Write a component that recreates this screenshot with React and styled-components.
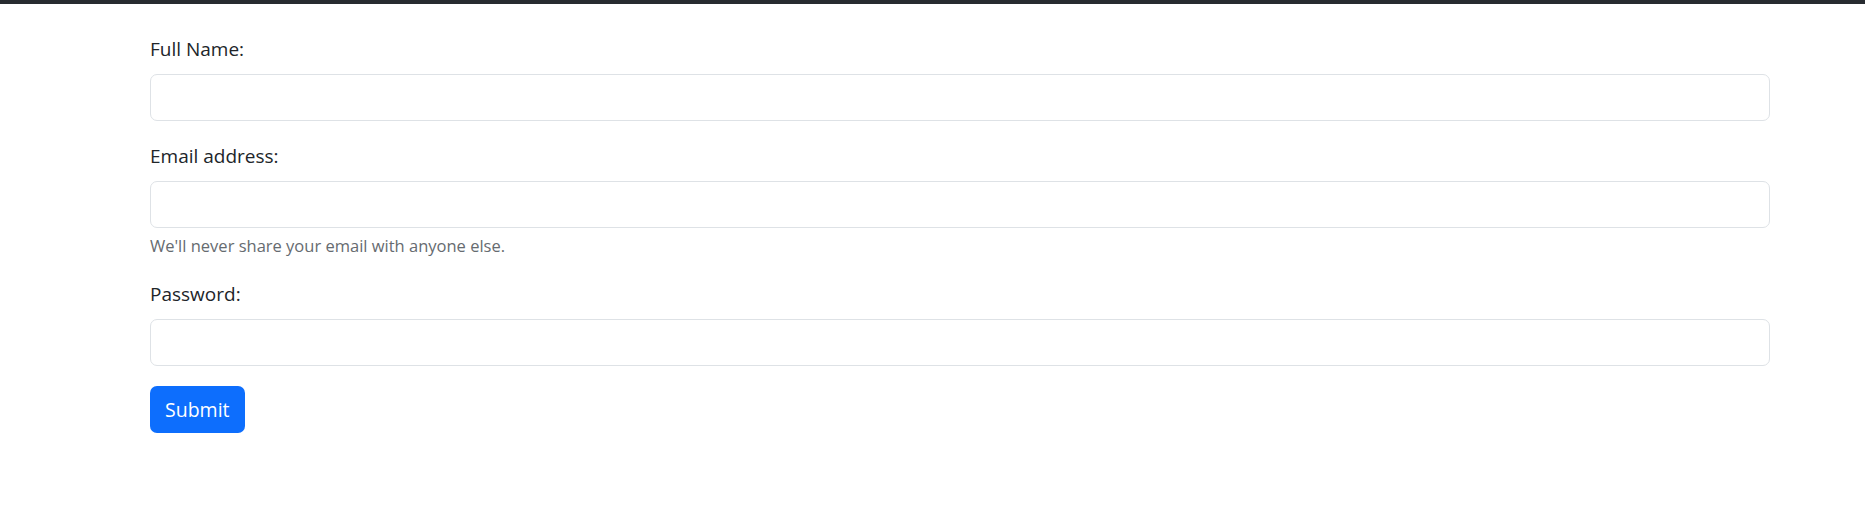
import React from 'react';
import styled, { createGlobalStyle } from 'styled-components';

const GlobalStyle = createGlobalStyle`
  body {
    margin: 0;
    background: #fff;
    color: #212529;
    font-family: 'Open Sans', 'Noto Sans', sans-serif;
  }
`;

const TopBar = styled.div`
  height: 4px;
  background-color: #272b30;
`;

const Container = styled.div`
  width: 1620px;
  padding: 30px 0 0 150px;
`;

const Group = styled.div`
  margin-bottom: 20px;
`;

const Label = styled.label`
  display: block;
  font-size: 19px;
  line-height: 30px;
  margin-bottom: 10px;
`;

const Input = styled.input`
  display: block;
  box-sizing: border-box;
  width: 100%;
  height: 47px;
  padding: 7px 15px;
  font-size: 19px;
  border: 1px solid #dee2e6;
  border-radius: 7px;
  background: #fff;
  outline: none;
`;

const Help = styled.div`
  margin-top: 5px;
  font-size: 16.5px;
  line-height: 26px;
  color: #666b70;
`;

const Button = styled.button`
  height: 47px;
  padding: 0 15px;
  font-family: inherit;
  font-size: 19.5px;
  color: #fff;
  background-color: #0d6efd;
  border: none;
  border-radius: 7px;
  cursor: pointer;
`;

const App = () => {
  return (
    <>
      <GlobalStyle />
      <TopBar />
      <Container>
        <form>
          <Group>
            <Label htmlFor="name">Full Name:</Label>
            <Input id="name" type="text" />
          </Group>
          <Group>
            <Label htmlFor="email">Email address:</Label>
            <Input id="email" type="email" />
            <Help>We'll never share your email with anyone else.</Help>
          </Group>
          <Group>
            <Label htmlFor="password">Password:</Label>
            <Input id="password" type="password" />
          </Group>
          <Button type="submit">Submit</Button>
        </form>
      </Container>
    </>
  );
};

export default App;
